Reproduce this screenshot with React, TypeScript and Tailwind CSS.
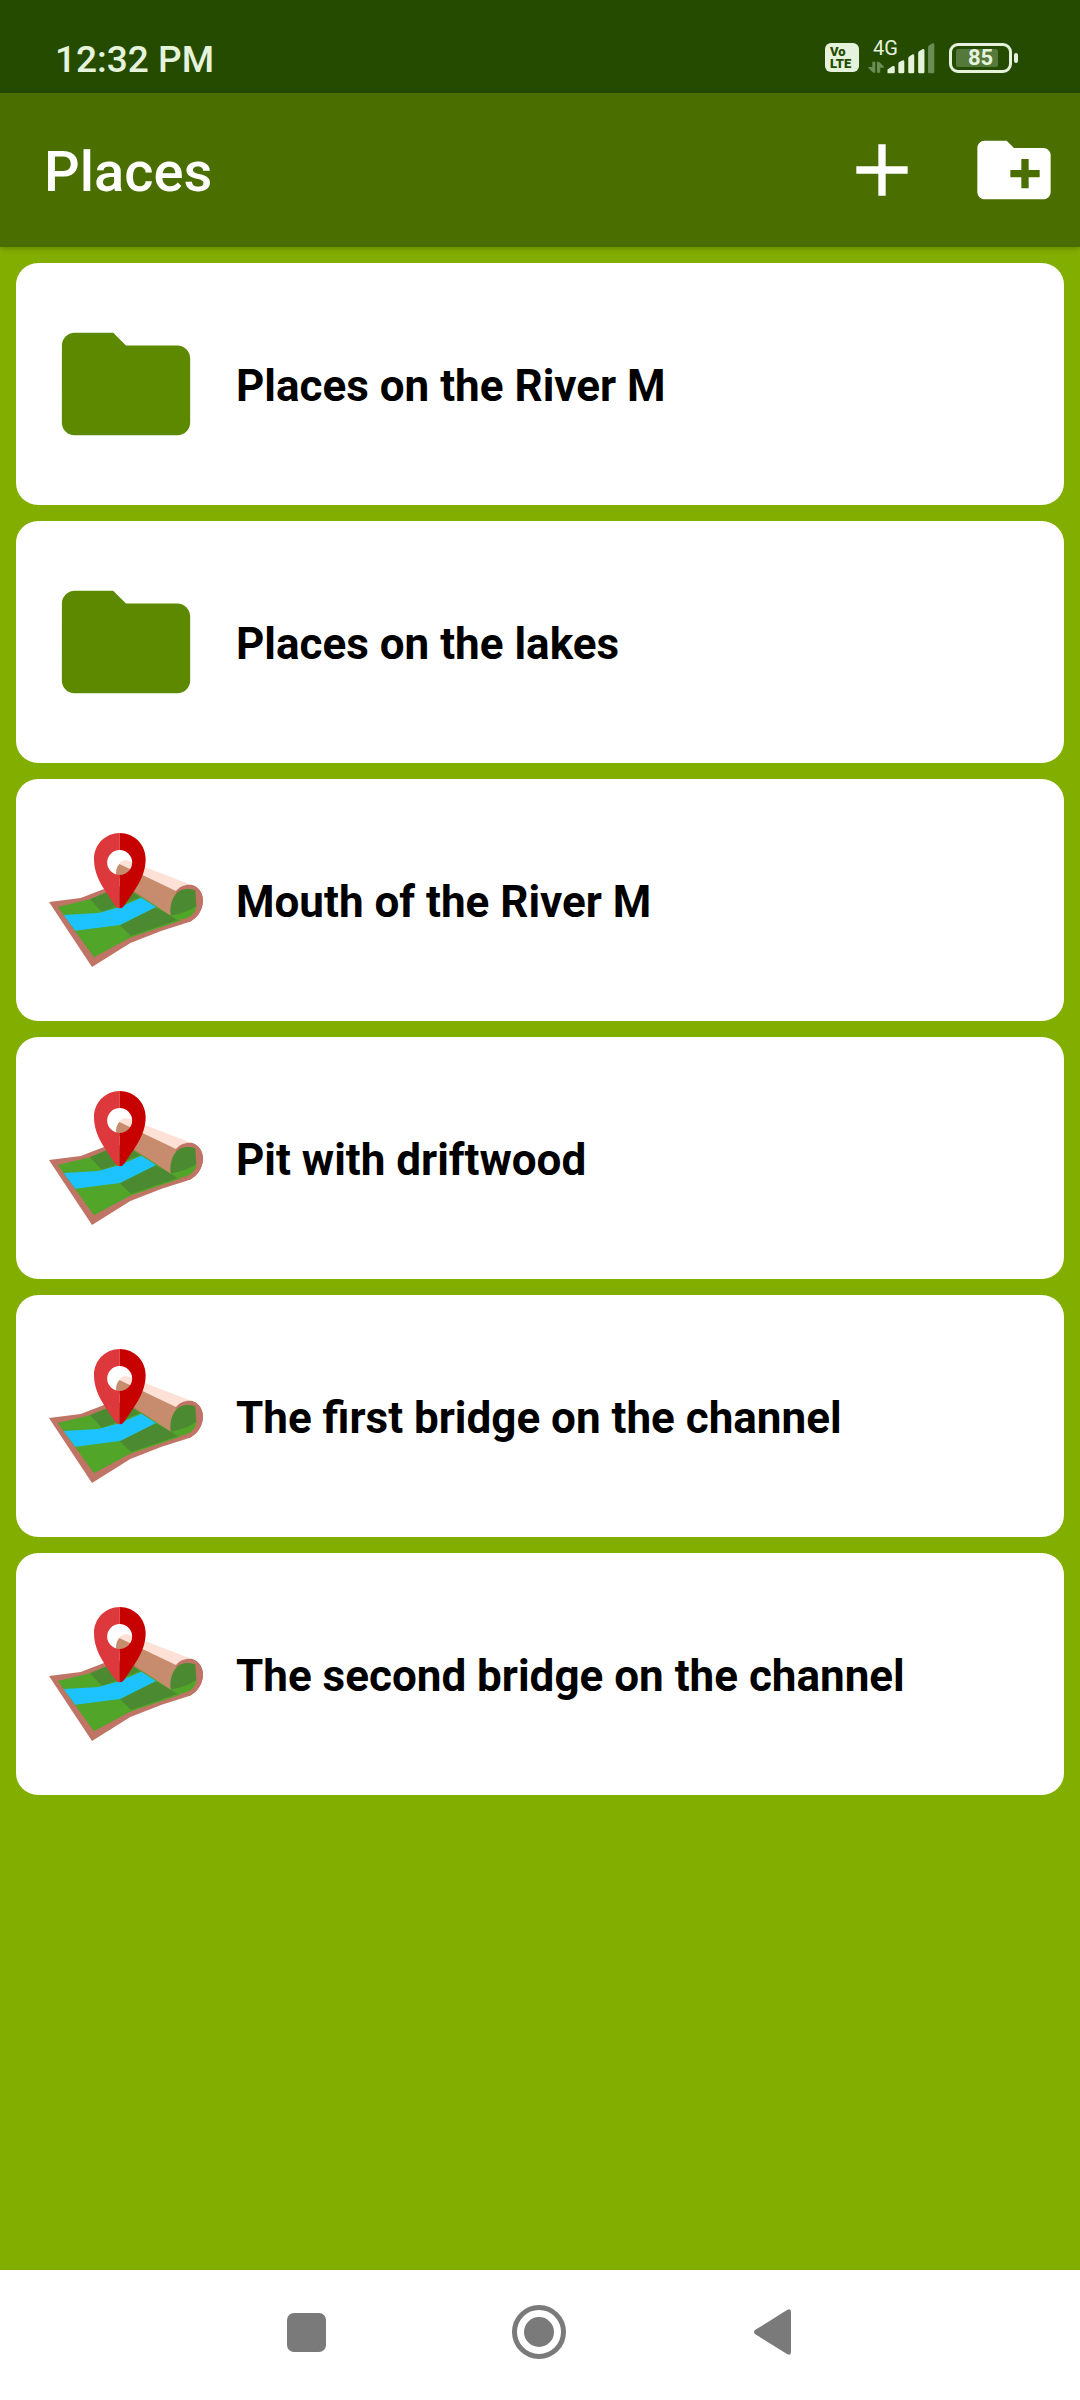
import { MdAdd, MdCreateNewFolder, MdFolder } from "react-icons/md";

type Place = {
  name: string;
  kind: "folder" | "place";
};

const places: Place[] = [
  { name: "Places on the River M", kind: "folder" },
  { name: "Places on the lakes", kind: "folder" },
  { name: "Mouth of the River M", kind: "place" },
  { name: "Pit with driftwood", kind: "place" },
  { name: "The first bridge on the channel", kind: "place" },
  { name: "The second bridge on the channel", kind: "place" },
];

function MapIcon() {
  return (
    <svg viewBox="57 39 462 462" className="size-[154px] shrink-0" aria-hidden="true">
      {/* sheet border */}
      <path
        d="M57 276 L152 264 L222 237 L300 226 L440 318 L484 224 C507 230 519 249 519 273 C518 301 501 324 480 335 L395 362 L301 399 L186 471 Z"
        fill="#BF7465"
      />
      {/* grass */}
      <path d="M83 291 L180 268 L232 246 L300 240 L445 326 L499 289 L497 304 C492 314 480 321 468 326 L300 383 L192 442 Z" fill="#51A528" />
      <path d="M180 268 L232 246 L300 240 L330 262 L216 306 Z" fill="#4C8A31" />
      <path d="M270 346 L376 292 L440 325 L443 330 L303 378 Z" fill="#4C8A31" />
      {/* river */}
      <path d="M101 315 L205 309 L270 291 L334 263 L378 291 L270 345 L136 362 Z" fill="#1DC3FF" />
      {/* rolled edge */}
      <path d="M270 159 C274 152 282 150 292 151 L483 224 C463 224 447 231 438 244 L268 165 Z" fill="#FDE0D6" />
      <path d="M268 162 C260 170 258 181 258 194 L316 246 L422 317 L450 290 L450 248 L438 243 Z" fill="#C68C6D" />
      <path d="M436 246 C447 230 463 223 483 224 C507 230 519 249 519 273 C518 301 501 324 480 335 L440 328 L460 300 Z" fill="#BF7465" />
      <path d="M422 317 C418 285 427 257 449 242 C464 235 482 236 496 241 L499 290 C480 303 455 313 422 317 Z" fill="#4C8A31" />
      <path d="M422 317 C455 311 480 301 499 288 C499 305 484 321 466 326 L442 330 Z" fill="#51A528" />
      {/* pin */}
      <path
        d="M269 69 C226 69 192 104 192 147 C192 205 229 245 255 286 Q261 295 269 295 V195 A37.5 37.5 0 0 1 269 120 Z"
        fill="#DD383B"
      />
      <path
        d="M269 69 C313 69 347 104 347 147 C347 205 309 245 284 286 Q278 295 269 295 V195 A37.5 37.5 0 0 0 269 120 Z"
        fill="#C70000"
      />
    </svg>
  );
}

function SignalIcon() {
  return (
    <svg viewBox="204 60 204 100" className="h-[33px] w-[68px]" aria-hidden="true">
      <g fill="#E6F3DC">
        <path d="M262 158 V146 L278 136 Q284 134 284 140 V154 Q284 158 280 158 Z" />
        <path d="M295 154 V129 Q295 125 299 123 L307 119 Q313 117 313 123 V154 Q313 158 309 158 H299 Q295 158 295 154 Z" />
        <path d="M325 154 V112 Q325 108 329 106 L337 101 Q343 99 343 105 V154 Q343 158 339 158 H329 Q325 158 325 154 Z" />
        <path d="M355 154 V96 Q355 92 359 90 L368 85 Q374 83 374 89 V154 Q374 158 370 158 H359 Q355 158 355 154 Z" />
      </g>
      <g fill="#6C8C55">
        <path d="M385 154 V79 Q385 75 389 73 L398 67 Q404 65 404 71 V154 Q404 158 400 158 H389 Q385 158 385 154 Z" />
        <path d="M216 123 H225 V156 H219 L204 142 V139 H216 Z M230 123 H236 L251 137 V141 H240 V156 H230 Z" />
      </g>
    </svg>
  );
}

function StatusBar() {
  return (
    <div className="flex items-center justify-between bg-[#254B00] pt-[22px] pr-[62px] pl-[55px] text-[#E6F3DC]">
      <span className="pt-1 text-[37px] leading-[67px] font-medium">12:32 PM</span>
      <div className="flex items-center">
        <div className="flex h-[29px] w-[34px] flex-col justify-center rounded-[6px] bg-[#E6F3DC] pl-[5px] text-[13px] leading-[12px] font-black text-[#254B00]">
          <span>Vo</span>
          <span>LTE</span>
        </div>
        <div className="relative ml-[9px] pr-[13px]">
          <SignalIcon />
          <span className="absolute -top-[3px] left-[5px] text-[20px] leading-[20px]">4G</span>
        </div>
        <div className="relative flex h-[30px] w-[63px] items-center justify-center rounded-[9px] border-3 border-current">
          <span className="absolute top-[3px] left-[4px] h-[18px] w-[42px] rounded-[2px] bg-[#55783B]" />
          <span className="relative text-[22px] leading-[24px] font-bold">85</span>
        </div>
        <span className="ml-[2px] h-[10px] w-[4px] rounded-[2px] bg-current" />
      </div>
    </div>
  );
}

function AppBar() {
  return (
    <header className="relative flex h-[154px] items-center bg-[#4A6E00] text-white shadow-[0_1px_6px_rgba(0,0,0,0.25)]">
      <h1 className="flex-1 pt-1 pl-[44px] text-[56px] font-medium">Places</h1>
      <button type="button" aria-label="Add place" className="flex h-full w-[132px] items-center justify-center">
        <MdAdd className="size-[88px]" />
      </button>
      <button type="button" aria-label="Add folder" className="flex h-full w-[132px] items-center justify-center">
        <MdCreateNewFolder className="size-[88px]" />
      </button>
    </header>
  );
}

function PlaceCard({ place }: { place: Place }) {
  return (
    <li>
      <button
        type="button"
        className="flex w-full items-center gap-[33px] rounded-[22px] bg-white px-[33px] py-[44px] text-left"
      >
        {place.kind === "folder" ? (
          <MdFolder className="size-[154px] shrink-0 text-[#5C8900]" />
        ) : (
          <MapIcon />
        )}
        <span className="pt-1 text-[44px] font-bold text-black">{place.name}</span>
      </button>
    </li>
  );
}

function NavigationBar() {
  return (
    <nav className="flex h-[130px] justify-center bg-white pr-[2px] pb-[6px] text-[#7A7A7A]">
      <button type="button" aria-label="Recent apps" className="flex w-[233px] items-center justify-center">
        <span className="size-[39px] rounded-[7px] bg-current" />
      </button>
      <button type="button" aria-label="Home" className="flex w-[233px] items-center justify-center">
        <span className="flex size-[54px] items-center justify-center rounded-full border-5 border-current">
          <span className="size-[30px] rounded-full bg-current" />
        </span>
      </button>
      <button type="button" aria-label="Back" className="flex w-[233px] items-center justify-center">
        <svg viewBox="0 0 37 46" className="h-[46px] w-[37px]" fill="currentColor" aria-hidden="true">
          <path d="M33 1 Q37 -1 37 3 V43 Q37 47 33 45 L1 25 Q-1 23 1 21 Z" />
        </svg>
      </button>
    </nav>
  );
}

export default function App() {
  return (
    <div className="flex min-h-screen flex-col bg-[#82AE00] font-[Roboto,sans-serif]">
      <StatusBar />
      <AppBar />
      <main className="flex-1 p-4">
        <ul className="flex flex-col gap-4">
          {places.map((place) => (
            <PlaceCard key={place.name} place={place} />
          ))}
        </ul>
      </main>
      <NavigationBar />
    </div>
  );
}
